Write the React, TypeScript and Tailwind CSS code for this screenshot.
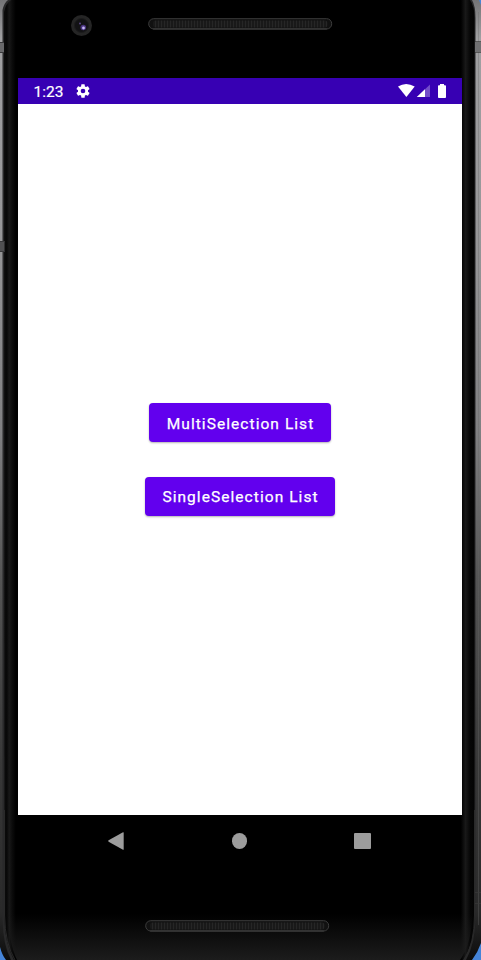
import React from "react";

function Casing() {
  return (
    <svg className="absolute inset-0" width="481" height="960" viewBox="0 0 481 960" aria-hidden="true">
      <defs>
        <linearGradient id="metal" x1="0" y1="0" x2="0" y2="1">
          <stop offset="0" stopColor="#747476" />
          <stop offset="0.04" stopColor="#a0a0a2" />
          <stop offset="0.25" stopColor="#969698" />
          <stop offset="0.45" stopColor="#808082" />
          <stop offset="0.6" stopColor="#555" />
          <stop offset="0.8" stopColor="#383838" />
          <stop offset="0.95" stopColor="#2a2a2a" />
          <stop offset="1" stopColor="#0c0c0c" />
        </linearGradient>
        <linearGradient id="glass" x1="4" y1="0" x2="475" y2="0" gradientUnits="userSpaceOnUse">
          <stop offset="0" stopColor="#0c0c0c" />
          <stop offset="0.006" stopColor="#080808" />
          <stop offset="0.011" stopColor="#181818" />
          <stop offset="0.017" stopColor="#0c0c0c" />
          <stop offset="0.025" stopColor="#000" />
          <stop offset="0.97" stopColor="#000" />
          <stop offset="0.98" stopColor="#191919" />
          <stop offset="0.99" stopColor="#060606" />
          <stop offset="1" stopColor="#030303" />
        </linearGradient>
        <linearGradient id="chin" x1="0" y1="0" x2="0" y2="1">
          <stop offset="0" stopColor="#1c1c1c" stopOpacity="0" />
          <stop offset="1" stopColor="#1c1c1c" />
        </linearGradient>
      </defs>
      <rect width="481" height="960" fill="#4584d8" />
      <path d="M0 0H479Q480 3 481 5V943Q478 952 472 960H6Q2 955 0 947Z" fill="url(#metal)" />
      <path d="M2.5 10Q4 3 8 0H472Q475.5 6 475.5 18V917Q475.5 943 466 960H11Q3 945 2.5 920Z" fill="#29292a" />
      <path d="M4 12Q6 3 11 0H470Q474.5 6 474.5 18V917Q474.5 943 463 960H14Q5 944 4.5 920Z" fill="url(#glass)" />
      <path d="M478.5 12V925" stroke="#666" strokeOpacity=".35" />
      <path d="M4.5 810V915Q5 944 15 960M474.5 810V915Q474.5 944 464 960" fill="none" stroke="#292929" strokeWidth="1" />
      <path d="M8 914H472Q472 943 460 960H17Q9 944 8 914Z" fill="url(#chin)" />
      <rect x="0" y="42" width="4" height="11" fill="#69696b" />
      <rect x="0" y="241" width="4.5" height="11" fill="#505052" />
      <path d="M0 42.5H4M0 52.5H4M0 241.5H4.5M0 251.5H4.5" stroke="#38383a" />
      <rect x="475" y="42" width="6" height="10" fill="#707072" />
      <path d="M475 41.5H481M475 52.5H481M475 892.5H481M475 903.5H481" stroke="#3a3a3a" strokeOpacity=".7" />
    </svg>
  );
}

function Speaker({ id }: { id: string }) {
  return (
    <svg width="185" height="12" viewBox="0 0 185 12" aria-hidden="true">
      <defs>
        <pattern id={id} width="3" height="3" patternUnits="userSpaceOnUse">
          <rect width="3" height="3" fill="#191919" />
          <path d="M1.5 0V3" stroke="#262626" strokeWidth="1" />
        </pattern>
      </defs>
      <rect x=".7" y=".7" width="183" height="10.3" rx="5" fill="#111" stroke="#3c3c3c" />
      <rect x="5" y="2.5" width="174.5" height="7" rx="3" fill={`url(#${id})`} />
      <path d="M5 11H179" stroke="#555" strokeOpacity=".6" />
    </svg>
  );
}

function Camera() {
  return (
    <svg width="22" height="22" viewBox="0 0 22 22" aria-hidden="true">
      <circle cx="10.5" cy="10.5" r="10.5" fill="#252525" />
      <circle cx="10.5" cy="10.5" r="7" fill="#121214" stroke="#1c1c1c" />
      <circle cx="9" cy="8.5" r="1" fill="#5b4785" />
      <circle cx="12.3" cy="12.5" r="2.8" fill="#49337d" />
      <circle cx="12.5" cy="13" r="1.4" fill="#c4b8f4" />
    </svg>
  );
}

function StatusBar() {
  return (
    <div className="flex h-[26px] items-center bg-[#3700b3] px-[15px] text-white">
      <span className="w-[41.5px] pl-[0.5px] pt-px text-[15.5px] leading-6 [-webkit-text-stroke:0.2px_white]">1:23</span>
      <svg width="16" height="16" viewBox="0 0 24 24" fill="white" aria-hidden="true">
        <path fillRule="evenodd" d="M19.43 12.98c.04-.32.07-.64.07-.98s-.03-.66-.07-.98l2.11-1.65c.19-.15.24-.42.12-.64l-2-3.46c-.12-.22-.39-.3-.61-.22l-2.49 1c-.52-.4-1.08-.73-1.69-.98l-.38-2.65A.49.49 0 0 0 14 2h-4a.49.49 0 0 0-.49.42l-.38 2.65c-.61.25-1.17.59-1.69.98l-2.49-1c-.23-.09-.49 0-.61.22l-2 3.46c-.13.22-.07.49.12.64l2.11 1.65c-.04.32-.07.65-.07.98s.03.66.07.98l-2.11 1.65c-.19.15-.24.42-.12.64l2 3.46c.12.22.39.3.61.22l2.49-1c.52.4 1.08.73 1.69.98l.38 2.65c.03.24.24.42.49.42h4c.25 0 .46-.18.49-.42l.38-2.65c.61-.25 1.17-.59 1.69-.98l2.49 1c.23.09.49 0 .61-.22l2-3.46c.12-.22.07-.49-.12-.64zM12 15.5a3.5 3.5 0 1 1 0-7 3.5 3.5 0 0 1 0 7" />
      </svg>
      <svg className="ml-auto" width="49" height="16" viewBox="0 0 49 16" fill="white" aria-hidden="true">
        <path d="M0 3.5Q8-1.5 16.7 3.5L8.4 14Z" />
        <path d="M18.8 14L32 1.5V14Z" fillOpacity=".3" />
        <path d="M18.8 14L27 6.2V14Z" />
        <path d="M42 1H46V2.3H47.2Q48 2.3 48 3.2V14Q48 15 47.2 15H40.8Q40 15 40 14V3.2Q40 2.3 40.8 2.3H42Z" />
      </svg>
    </div>
  );
}

function ListButton({ label, width }: { label: string; width: string }) {
  return (
    <button
      className={`${width} h-[39px] whitespace-nowrap rounded-[4px] bg-[#6200ee] pl-px pt-[2px] text-center text-[15.5px] leading-5 tracking-[1.06px] text-white shadow-[0_1px_2px_rgba(0,0,0,0.3)] [-webkit-text-stroke:0.25px_white]`}
    >
      {label}
    </button>
  );
}

export default function App() {
  return (
    <div className="relative h-[960px] w-[481px] overflow-hidden font-['Roboto',sans-serif]">
      <Casing />
      <div className="relative flex h-full flex-col pl-[18px] pr-[19px]">
        <header className="flex h-[78px] items-start pl-[53px] pt-[15px]">
          <Camera />
          <div className="ml-[55px] mt-[3px]">
            <Speaker id="earpiece" />
          </div>
        </header>
        <StatusBar />
        <main className="flex h-[711px] flex-col items-center bg-white pt-[299.4px]">
          <ListButton label="MultiSelection List" width="w-[182px]" />
          <div className="h-[34.5px] shrink-0" />
          <ListButton label="SingleSelection List" width="w-[190px]" />
        </main>
        <nav className="flex h-[52px] items-center justify-between pl-[90px] pr-[91px]">
          <svg width="16" height="18" viewBox="0 0 16 18" fill="#9c9c9c" aria-label="Back">
            <path d="M.6 8.3L15 .2Q15.7 0 15.7.8V17.2Q15.7 18 15 17.7L.6 9.7Q-.2 9 .6 8.3Z" />
          </svg>
          <div className="ml-px h-[15.5px] w-[15.5px] rounded-full bg-[#9c9c9c]" />
          <div className="h-4 w-[17px] rounded-[1px] bg-[#9c9c9c]" />
        </nav>
        <footer className="flex justify-center pr-[6px] pt-[53px]">
          <Speaker id="loudspeaker" />
        </footer>
      </div>
    </div>
  );
}
